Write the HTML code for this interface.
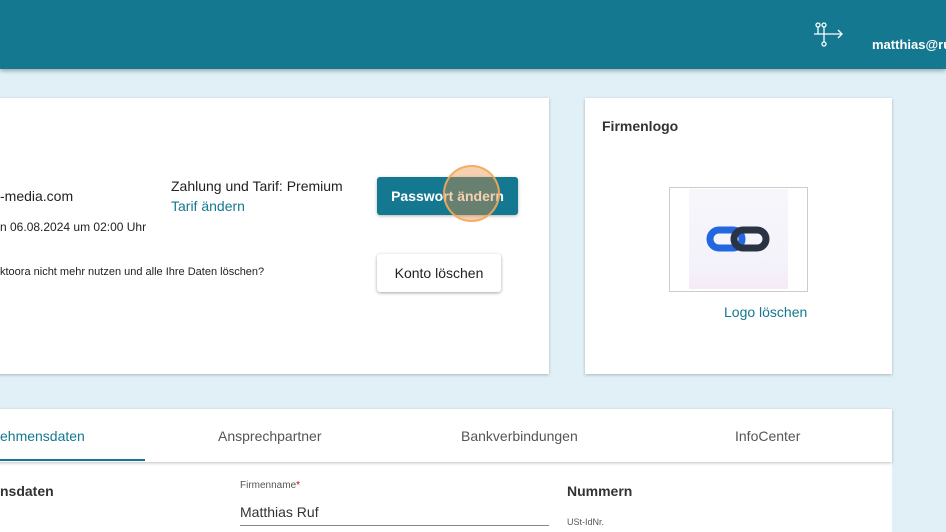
<!DOCTYPE html>
<html><head><meta charset="utf-8"><style>
*{margin:0;padding:0;box-sizing:border-box}
body{width:946px;height:527px;overflow:hidden;background:#e1f0f7;font-family:"Liberation Sans",sans-serif;position:relative;color:#222}
.a{position:absolute;white-space:nowrap}
.card{position:absolute;background:#fff;box-shadow:0 1px 3px rgba(0,0,0,.25)}
.teal{color:#157891}
</style></head><body>
<div class="a" style="left:0;top:0;width:946px;height:69px;background:#157891;box-shadow:0 2px 4px rgba(0,0,0,.3)"></div>
<svg class="a" style="left:812px;top:22px" width="34" height="26" viewBox="0 0 34 26" fill="none" stroke="#fff" stroke-width="1.3"><circle cx="6" cy="3" r="2"/><circle cx="12" cy="3" r="2"/><circle cx="12" cy="22" r="2"/><path d="M6 5v7M12 5v7M2 12h28M12 12v8M26 8l4 4-4 4"/></svg>
<div class="a" style="left:872px;top:37px;color:#fff;font-size:13px;font-weight:bold">matthias@ru</div>

<div class="card" style="left:-5px;top:98px;width:554px;height:276px"></div>
<div class="a" style="left:0;top:188px;font-size:14px">-media.com</div>
<div class="a" style="left:0;top:220px;font-size:12px">n 06.08.2024 um 02:00 Uhr</div>
<div class="a" style="left:0;top:266px;font-size:11px">ktoora nicht mehr nutzen und alle Ihre Daten löschen?</div>
<div class="a" style="left:171px;top:178px;font-size:14px">Zahlung und Tarif: Premium</div>
<div class="a teal" style="left:171px;top:198px;font-size:14px">Tarif ändern</div>
<div class="a" style="left:377px;top:177px;width:141px;height:38px;background:#157891;border-radius:3px;box-shadow:0 1px 3px rgba(0,0,0,.3);color:#fff;font-size:14px;font-weight:bold;text-align:center;line-height:38px">Passwort ändern</div>
<div class="a" style="left:443px;top:165px;width:57px;height:57px;border-radius:50%;background:rgba(230,140,60,.4);border:2px solid rgba(245,170,90,.9)"></div>
<div class="a" style="left:377px;top:254px;width:124px;height:38px;background:#fff;border-radius:3px;box-shadow:0 1px 3px rgba(0,0,0,.35);font-size:14px;text-align:center;line-height:38px">Konto löschen</div>

<div class="card" style="left:585px;top:98px;width:307px;height:276px"></div>
<div class="a" style="left:602px;top:118px;font-size:14px;font-weight:bold;color:#333">Firmenlogo</div>
<div class="a" style="left:669px;top:187px;width:139px;height:105px;border:1px solid #ccc;background:#fff"></div>
<div class="a" style="left:689px;top:189px;width:99px;height:100px;background:linear-gradient(#f6f7fb,#f3f2fa 80%,#f7e9f7)"></div>
<svg class="a" style="left:706px;top:226px" width="64" height="26" viewBox="0 0 64 26"><rect x="4" y="4" width="32" height="18" rx="9" fill="none" stroke="#2466e0" stroke-width="7"/><rect x="28" y="4" width="32" height="18" rx="9" fill="none" stroke="#2a3344" stroke-width="7"/></svg>
<div class="a teal" style="left:724px;top:304px;font-size:14px">Logo löschen</div>

<div class="card" style="left:-5px;top:409px;width:897px;height:53px;z-index:2"></div>
<div class="a teal" style="left:0;top:428px;font-size:14px;z-index:3">ehmensdaten</div>
<div class="a" style="left:0;top:459px;width:145px;height:2px;background:#157891;z-index:3"></div>
<div class="a" style="left:218px;top:428px;font-size:14px;color:#555;z-index:3">Ansprechpartner</div>
<div class="a" style="left:461px;top:428px;font-size:14px;color:#555;z-index:3">Bankverbindungen</div>
<div class="a" style="left:735px;top:428px;font-size:14px;color:#555;z-index:3">InfoCenter</div>
<div class="a" style="left:-5px;top:462px;width:897px;height:70px;background:#fff"></div>
<div class="a" style="left:0;top:483px;font-size:14px;font-weight:bold;color:#333">nsdaten</div>
<div class="a" style="left:240px;top:480px;font-size:10px;color:#555">Firmenname<span style="color:#c00">*</span></div>
<div class="a" style="left:240px;top:504px;font-size:14px;color:#333">Matthias Ruf</div>
<div class="a" style="left:240px;top:525px;width:309px;height:1px;background:#888"></div>
<div class="a" style="left:567px;top:483px;font-size:14px;font-weight:bold;color:#333">Nummern</div>
<div class="a" style="left:567px;top:517px;font-size:9px;color:#555">USt-IdNr.</div>
</body></html>
